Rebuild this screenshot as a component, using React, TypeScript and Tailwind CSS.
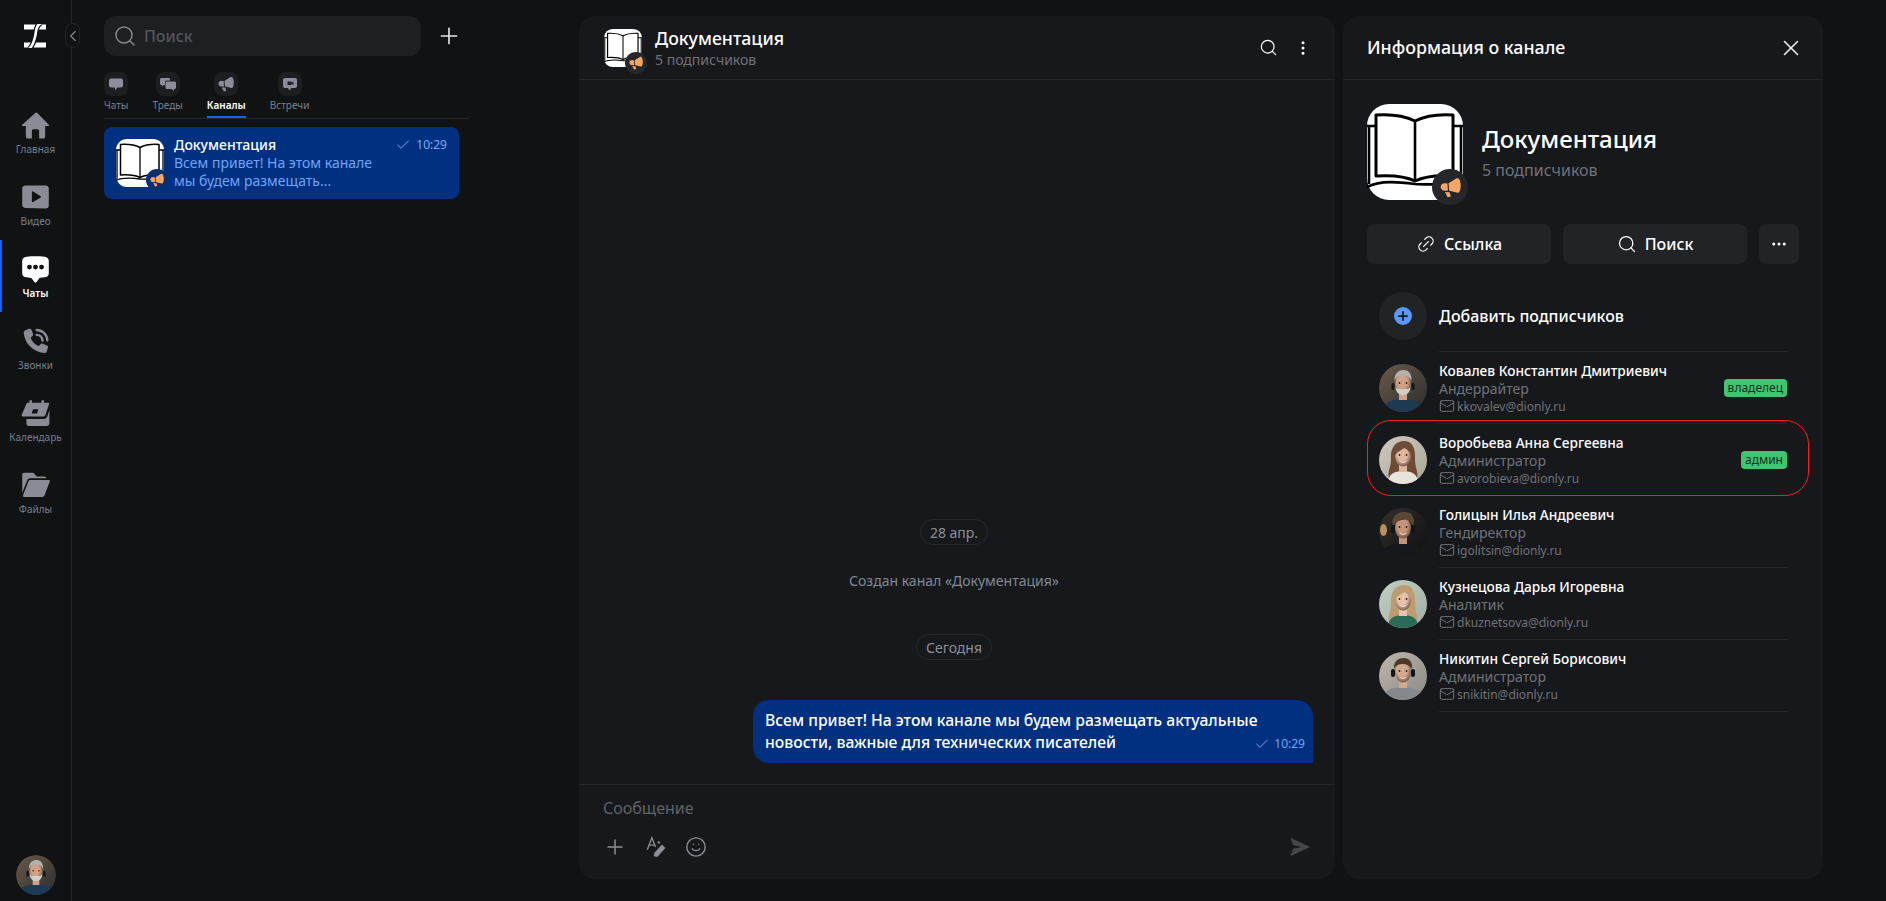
import { useId } from "react";
import { Search, Plus, X, Link2, MoreHorizontal, MoreVertical, Check, Mail, Smile, ChevronLeft } from "lucide-react";

function Book({ className }: { className?: string }) {
  return (
    <svg viewBox="0 0 96 96" className={className}>
      <rect width="96" height="96" rx="22" fill="#fff" />
      <path d="M9 11C24 10 38 12 48 17C58 12 72 10 86 11V72C72 71 58 72 48 77C38 72 24 71 9 72Z" fill="#fff" stroke="#000" strokeWidth="3" strokeLinejoin="round" />
      <path d="M48 17V77" stroke="#000" strokeWidth="2.6" />
      <path d="M0 22H9M2 22V80M86 22H96M94 22V76" stroke="#000" strokeWidth="2.6" fill="none" />
      <path d="M0 83C14 76 32 78 48 80C60 81 76 80 96 80" stroke="#000" strokeWidth="2.6" fill="none" />
    </svg>
  );
}

function Megaphone({ className, fill = "#f4a664" }: { className?: string; fill?: string }) {
  return (
    <svg viewBox="0 0 16 16" className={className} fill={fill}>
      <path d="M6.500 4.800L12.300 1.200C13.600.5 14.800 1.300 15.200 2.800C16 5.500 16 8 15.200 10.500C14.800 11.800 13.800 12.300 12.600 11.800L7 10.500Z" />
      <path d="M.5 7.500C.5 5.600 2 4.700 3.500 4.700L5.700 5L6 10.400L3.500 10.500C1.800 10.500.5 9.300.5 7.500Z" />
      <path d="M3.800 11.500L7.300 11.600L8.300 14.800L5.800 15.500Z" />
    </svg>
  );
}

function ChannelAvatar({ size, badge, badgeBg, glyph }: { size: string; badge: string; badgeBg: string; glyph: string }) {
  return (
    <div className={`relative shrink-0 ${size}`}>
      <Book className="w-full h-full" />
      <div className={`absolute flex items-center justify-center rounded-full ${badge} ${badgeBg}`}>
        <Megaphone className={glyph} />
      </div>
    </div>
  );
}

type P = { bg: string; bg2: string; skin: string; hair: string; shirt: string; kind: "man" | "grey" | "long" | "messy" | "short"; patch?: string };

function Portrait({ bg, bg2, skin, hair, shirt, kind, patch }: P) {
  const id = useId();
  return (
    <svg viewBox="0 0 48 48" className="w-12 h-12 shrink-0 rounded-full">
      <defs>
        <linearGradient id={`${id}g`} x1="0" y1="0" x2="1" y2="1">
          <stop offset="0" stopColor={bg} />
          <stop offset="1" stopColor={bg2} />
        </linearGradient>
        <radialGradient id={`${id}f`} cx="0.45" cy="0.4" r="0.7">
          <stop offset="0.45" stopColor={skin} />
          <stop offset="1" stopColor="#5d3d30" />
        </radialGradient>
        <filter id={`${id}b`} x="-15%" y="-15%" width="130%" height="130%">
          <feGaussianBlur stdDeviation="0.6" />
        </filter>
      </defs>
      <rect width="48" height="48" fill={`url(#${id}g)`} />
      <g filter={`url(#${id}b)`}>
        {patch && <ellipse cx="4.500" cy="22" rx="3.500" ry="6" fill={patch} />}
        {kind === "long" && <path d="M12 24C11 11 17 5 25 5C33 5 37 12 36 24C36 32 40 37 38 42C32 40 16 40 10 42C8 36 12 31 12 24Z" fill={hair} />}
        <path d={kind === "long" ? "M9 48C9 38 15 35 24 35C33 35 39 38 39 48Z" : "M2 48C4 38 14 35 24 35C34 35 44 38 46 48Z"} fill={shirt} />
        <rect x="20" y="27" width="8" height="9" fill={skin} />
        <ellipse cx="24" cy="20" rx="8" ry="10.5" fill={`url(#${id}f)`} />
        {kind === "long" && <path d="M15 21C14 12 20 8 25 8C31 8 34 13 33 22C31 15 28 13 25 12C22 15 18 15 15 21Z" fill={hair} />}
        {kind === "grey" && (
          <>
            <path d="M15.500 17C15 9 20 6 24.500 6C29 6 33 9 32.500 17C30 12 27 11.500 24 11.500C21 11.500 18 12 15.500 17Z" fill={hair} />
            <path d="M16.500 23C17 34 31 34 31.500 23C29 26.500 19 26.500 16.500 23Z" fill="#cfccc6" />
            <rect x="12.500" y="19" width="3" height="7" rx="1.500" fill="#15181c" />
            <rect x="32.500" y="19" width="3" height="7" rx="1.500" fill="#15181c" />
          </>
        )}
        {(kind === "messy" || kind === "short") && (
          <>
            <path d={kind === "messy" ? "M14 19C11 8 19 3 26 4C33 4 37 10 34 19C32 13 29 11 24 12C20 12 16 14 14 19Z" : "M15 17C14 9 20 6 25 6C30 6 34 10 33 17C30 13 27 12 24 12C20 12 17 13 15 17Z"} fill={hair} />
            <rect x="12" y="17" width="4" height="8" rx="2" fill="#111316" />
            <rect x="32" y="17" width="4" height="8" rx="2" fill="#111316" />
          </>
        )}
        <circle cx="20.500" cy="19" r="0.9" fill="#2b211c" />
        <circle cx="27.500" cy="19" r="0.9" fill="#2b211c" />
        <path d="M20.500 25C22.500 26.800 25.500 26.800 27.500 25" stroke="#f3e3da" strokeWidth="1" fill="none" />
      </g>
    </svg>
  );
}

const nav = [
  { label: "Главная", icon: <path d="M12 1.500L.8 11.500c-.4.4-.1 1 .4 1H4v8.500c0 1 .8 1.800 1.800 1.800H9v-6.300c0-.8.7-1.500 1.500-1.500h3c.8 0 1.500.7 1.500 1.500v6.300h3.200c1 0 1.800-.8 1.800-1.800v-8.500h2.800c.5 0 .8-.6.4-1L13.300 1.500a1 1 0 0 0-1.300 0Z" /> },
  { label: "Видео", icon: <path fillRule="evenodd" d="M3.500 2h17c1.400 0 2.500 1 2.500 2.400v14.300c0 1.500-1.200 2.600-2.700 2.500L3.400 20.600C2 20.500 1 19.400 1 18V4.500C1 3.100 2.100 2 3.500 2ZM9 7.500v7.800c0 .5.500.8 1 .5l6.300-3.700c.4-.3.4-.9 0-1.100L10 7c-.5-.3-1 0-1 .5Z" /> },
  { label: "Чаты", active: true, icon: <path fillRule="evenodd" d="M4.500 1.500c5-.5 10-.5 15 0 2 .2 3.500 1.500 3.500 3.500v10c0 2-1.500 3.300-3.500 3.500l-4 .4-2.800 3.600c-.4.500-1 .500-1.400 0L8.500 19l-4-.5C2.500 18.300 1 17 1 15V5c0-2 1.500-3.300 3.500-3.500ZM7 8a2 2 0 1 0 0 4 2 2 0 0 0 0-4Zm5 0a2 2 0 1 0 0 4 2 2 0 0 0 0-4Zm5 0a2 2 0 1 0 0 4 2 2 0 0 0 0-4Z" /> },
  { label: "Звонки", icon: <><path d="M4 2.500 7 1.500c.7-.2 1.300.1 1.600.8l1.400 3.500c.2.600 0 1.200-.4 1.600L8 8.800c1 3 3.500 5.700 6.700 7l1.700-1.700c.4-.4 1-.5 1.600-.3l3.500 1.500c.6.300 1 1 .8 1.600l-.9 3.100c-.3 1-1.200 1.700-2.300 1.500C9.500 20.500 3 13.500 2.300 5 2.200 3.900 2.900 2.900 4 2.500Z" /><path d="M13 2.500c4.500 0 8.500 3.500 8.800 8.500M13 6.500c2.500 0 4.500 2 4.800 4.700" fill="none" stroke="currentColor" strokeWidth="2" strokeLinecap="round" /></> },
  { label: "Календарь", icon: <path fillRule="evenodd" d="M7 1h2v2h8V1h2v2h3.500c.6 0 1 .5.800 1l-3 9c-.3 1-1 1.500-2 1.500H1.500c-.8 0-1.200-.6-1-1.200L4.500 4c.3-.7.800-1 1.500-1h1V1Zm3 7.500L8.800 12h4.500l1-3.500H10ZM23.500 9v11c0 1.400-1 2.300-2.300 2.300H6.500c-1.200 0-2-.8-2-2v-3.800h14.300c1.400 0 2.500-.8 3-2.200L23.500 9Z" /> },
  { label: "Файлы", icon: <><path d="M2.500 1.500h7c.6 0 1 .2 1.400.6L13 4.500h6c1 0 1.800.5 2 1.500H7.500c-1.200 0-2 .7-2.400 1.800L1 18V3c0-.9.600-1.500 1.500-1.500Z" /><path d="M7.500 7.500H23c.7 0 1 .6.800 1.100L19.500 20c-.4 1-1.200 1.500-2.200 1.500H2.500c-.7 0-1.100-.6-.9-1.200L6 8.800c.3-.8.800-1.300 1.500-1.300Z" /></> },
];

function Logo() {
  return (
    <svg viewBox="0 0 22 24" className="w-[22px] h-6">
      <path d="M0 0.500H22V5.500H0ZM0 18.500H22V23.500H0Z" fill="#fff" />
      <path d="M17 -1C11 2 12.500 8 11 13C10 17 9 22 5 25" stroke="#111214" strokeWidth="5" fill="none" />
      <path d="M17 -1C11 2 12.500 8 11 13C10 17 9 22 5 25" stroke="#fff" strokeWidth="2.600" fill="none" />
    </svg>
  );
}

const tabs = [
  { label: "Чаты", glyph: <svg viewBox="0 0 16 16" className="w-4 h-4" fill="#8c8c9a"><path d="M3 2.500h10c1.200 0 2 .8 2 2v5c0 1.200-.8 2-2 2H9.500L7 14.500V11.500H3c-1.200 0-2-.8-2-2v-5c0-1.200.8-2 2-2Z" /></svg> },
  { label: "Треды", glyph: <svg viewBox="0 0 16 16" className="w-4 h-4" fill="#8c8c9a"><path d="M1.500 2h7C9.400 2 10 2.600 10 3.500v1H7C5.700 4.500 5 5.300 5 6.500V9H4L2 10.500V9h-.5C.6 9 0 8.400 0 7.500v-4C0 2.600.6 2 1.500 2Z" /><path d="M7 5.500h7.500c.9 0 1.500.6 1.500 1.500v4.500c0 .9-.6 1.500-1.500 1.500H14v2l-2.500-2H7c-.9 0-1.500-.6-1.500-1.500V7c0-.9.6-1.500 1.500-1.500Z" /></svg> },
  { label: "Каналы", active: true, glyph: <Megaphone className="w-4 h-4" fill="#8c8c9a" /> },
  { label: "Встречи", glyph: <svg viewBox="0 0 16 16" className="w-4 h-4"><path fillRule="evenodd" fill="#8c8c9a" d="M3 2h10c1.200 0 2 .8 2 2v6c0 1.200-.8 2-2 2H9.500L7.500 14.500 6 12H3c-1.200 0-2-.8-2-2V4c0-1.200.8-2 2-2Zm2.500 3.500v3.500h4V7.800l2 1.200V5.500l-2 1.200V5.500h-4Z" /></svg> },
];

const members: (P & { name: string; role: string; email: string; tag?: string; mark?: boolean })[] = [
  { name: "Ковалев Константин Дмитриевич", role: "Андеррайтер", email: "kkovalev@dionly.ru", tag: "владелец", bg: "#6b5a49", bg2: "#2a2d30", skin: "#cfa288", hair: "#b3b1ac", shirt: "#1d3a52", kind: "grey" },
  { name: "Воробьева Анна Сергеевна", role: "Администратор", email: "avorobieva@dionly.ru", tag: "админ", mark: true, bg: "#cfcabd", bg2: "#a9a597", skin: "#e0b8a0", hair: "#6e4c36", shirt: "#e8e4d9", kind: "long" },
  { name: "Голицын Илья Андреевич", role: "Гендиректор", email: "igolitsin@dionly.ru", bg: "#33302c", bg2: "#0f1012", skin: "#c4957a", hair: "#5a4634", shirt: "#16171a", kind: "messy", patch: "#b98f5f" },
  { name: "Кузнецова Дарья Игоревна", role: "Аналитик", email: "dkuznetsova@dionly.ru", bg: "#c3cdc4", bg2: "#9fb0a6", skin: "#e6c2aa", hair: "#bd9c70", shirt: "#2a6a58", kind: "long" },
  { name: "Никитин Сергей Борисович", role: "Администратор", email: "snikitin@dionly.ru", bg: "#bdb7ad", bg2: "#8b8a86", skin: "#d2a88e", hair: "#4d392a", shirt: "#85898d", kind: "short" },
];

function SideNav() {
  return (
    <nav className="relative flex h-full w-[72px] shrink-0 flex-col items-stretch border-r border-[#24262a]">
      <div className="flex h-[96px] items-start justify-center pt-6 pr-px">
        <Logo />
      </div>
      <div className="absolute left-[65px] top-[23px] flex h-[25px] w-[15px] items-center justify-center rounded-full border border-[#24262a] bg-[#111214]">
        <ChevronLeft className="h-[18px] w-[18px] shrink-0 text-[#8b8c94]" strokeWidth={1.5} />
      </div>
      {nav.map((n) => (
        <div key={n.label} className={`relative flex h-[72px] flex-col items-center pt-[15px] ${n.active ? "text-white" : "text-[#8b8b96]"}`}>
          {n.active && <div className="absolute left-0 top-0 h-full w-[2px] bg-[#0f62fe]" />}
          <svg viewBox="0 0 24 24" className="h-[29px] w-[29px]" fill="currentColor">{n.icon}</svg>
          <span className={`mt-[2px] text-[10px] leading-[14px] ${n.active ? "font-semibold text-white" : "text-[#767f8c]"}`}>{n.label}</span>
        </div>
      ))}
      <div className="mt-auto flex justify-center pb-[6px]">
        <div className="h-10 w-10 overflow-hidden rounded-full [&>svg]:h-10 [&>svg]:w-10">
          <Portrait {...members[0]} />
        </div>
      </div>
    </nav>
  );
}

function ChatList() {
  return (
    <section className="flex w-[507px] shrink-0 flex-col pl-8">
      <div className="mt-4 flex items-center">
        <div className="flex h-10 w-[317px] items-center rounded-xl bg-[#1d1f22] pl-[9px]">
          <Search className="h-6 w-6 text-[#85868e]" strokeWidth={1.5} />
          <span className="ml-[7px] text-[16px] font-medium text-[#54565c]">Поиск</span>
        </div>
        <Plus className="ml-[15px] h-[26px] w-[26px] text-[#e8e8ea]" strokeWidth={1.5} />
      </div>
      <div className="mt-4 flex h-[47px] w-[365px] gap-6 border-b border-[#24262a]">
        {tabs.map((t) => (
          <div key={t.label} className="flex flex-col items-center">
            <div className="flex h-6 w-6 items-center justify-center rounded-lg bg-[#1c1e21]">{t.glyph}</div>
            <span className={`mt-px text-[10px] leading-[16px] ${t.active ? "font-semibold text-white" : "text-[#767f8c]"}`}>{t.label}</span>
            {t.active && <div className="mt-[3px] h-[2px] w-full bg-[#0f62fe]" />}
          </div>
        ))}
      </div>
      <div className="mt-2 flex h-[72px] w-[355px] items-center rounded-lg bg-[#00307f] pl-3 pr-3">
        <ChannelAvatar size="w-12 h-12" badge="right-[-4px] bottom-[-4px] w-[22px] h-[22px]" badgeBg="bg-[#0a2f6e]" glyph="w-[14px] h-[14px]" />
        <div className="ml-[10px] min-w-0 flex-1">
          <div className="flex items-center justify-between">
            <span className="text-[14px] font-medium leading-[18px] text-white">Документация</span>
            <span className="flex items-center gap-[5px] text-[12px] leading-[18px] text-[#7aa9f5]">
              <Check className="h-4 w-4 text-[#7aa9f5]" strokeWidth={1.5} />
              10:29
            </span>
          </div>
          <p className="w-[210px] text-[14px] leading-[18px] text-[#6fa4f8]">Всем привет! На этом канале мы будем размещать...</p>
        </div>
      </div>
    </section>
  );
}

function Chat() {
  return (
    <main className="mt-4 mb-[22px] flex w-[756px] shrink-0 flex-col rounded-2xl bg-[#17181b]">
      <header className="flex h-[64px] shrink-0 items-center border-b border-[#24262a] pl-[25px] pr-[23px]">
        <ChannelAvatar size="w-[38px] h-[40px]" badge="right-[-5px] bottom-[-6px] w-[22px] h-[22px]" badgeBg="bg-[#24262a]" glyph="w-[14px] h-[14px]" />
        <div className="ml-[13px] flex-1">
          <div className="text-[17.7px] font-medium leading-[24px] text-white">Документация</div>
          <div className="text-[14px] leading-[20px] text-[#6f7279]">5 подписчиков</div>
        </div>
        <Search className="h-[19px] w-[19px] text-white" strokeWidth={1.5} />
        <MoreVertical className="ml-[16px] h-[18px] w-[18px] text-white" strokeWidth={2} />
      </header>
      <div className="flex flex-1 flex-col items-center justify-end pb-[21px] pr-[22px] pl-[22px]">
        <div className="mr-[6px] flex h-[26px] items-center rounded-full border border-[#25272b] px-[9px] text-[14px] text-[#8a8f98]">28 апр.</div>
        <div className="mr-[6px] mt-[26px] text-[14px] leading-[20px] text-[#7f8896]">Создан канал «Документация»</div>
        <div className="mr-[6px] mt-[43px] flex h-[26px] items-center rounded-full border border-[#25272b] px-[9px] text-[14px] text-[#8a8f98]">Сегодня</div>
        <div className="mt-[40px] flex w-[560px] self-end flex-col rounded-[16px] rounded-br-none bg-[#00307f] pt-[9px] pb-[10px] pl-3 pr-2">
          <p className="text-[15.7px] font-medium leading-[22px] text-white">Всем привет! На этом канале мы будем размещать актуальные</p>
          <div className="flex items-end justify-between">
            <span className="text-[15.7px] font-medium leading-[22px] text-white">новости, важные для технических писателей</span>
            <span className="flex items-center gap-[4px] text-[12px] leading-[18px] text-[#6fa4f8]">
              <Check className="h-4 w-4" strokeWidth={1.5} />
              10:29
            </span>
          </div>
        </div>
      </div>
      <footer className="flex h-[95px] shrink-0 flex-col border-t border-[#24262a] pl-6 pr-6">
        <div className="mt-[11px] text-[16px] leading-[24px] text-[#5f6268]">Сообщение</div>
        <div className="mt-[15px] flex items-center gap-[18px] text-[#8d8e96]">
          <Plus className="h-[24px] w-[24px]" strokeWidth={1.5} />
          <svg viewBox="0 0 24 24" className="h-[22px] w-[22px]" fill="none" stroke="currentColor">
            <path d="M2.500 15L7.500 2L11.500 12M4.500 10H10" strokeWidth="1.500" />
            <path d="M18.500 9.500L22 13L13.500 22.500L10 22L10.300 18.500Z" fill="currentColor" strokeWidth="0.500" />
            <circle cx="15" cy="7" r="1.300" fill="currentColor" strokeWidth="0" />
          </svg>
          <Smile className="h-[22px] w-[22px]" strokeWidth={1.500} />
          <svg viewBox="0 0 24 24" className="ml-auto h-[22px] w-[22px]" fill="#44464b">
            <path d="M1.500 2L23 12L1.500 22L4.500 14L14 12L4.500 10Z" />
          </svg>
        </div>
      </footer>
    </main>
  );
}

function Row({ m }: { m: (typeof members)[number] }) {
  return (
    <div className="relative flex h-[72px] items-center pl-3 pr-3">
      {m.mark && <div className="pointer-events-none absolute left-0 -right-[10px] -top-1 bottom-0 rounded-[24px] border border-[#ff1a1f]" />}
      <Portrait {...m} />
      <div className="ml-3 flex h-full flex-1 items-center justify-between border-b border-[#24262a]">
        <div className="pt-px">
          <div className="text-[13.7px] font-medium leading-[18px] text-white">{m.name}</div>
          <div className="text-[14px] leading-[18px] text-[#6f7279]">{m.role}</div>
          <div className="flex items-center text-[12px] leading-[17px] text-[#6f7279]">
            <Mail className="mr-[2px] h-4 w-4" strokeWidth={1.5} />
            {m.email}
          </div>
        </div>
        {m.tag && <span className="flex h-[18px] items-center rounded-[4px] bg-[#3fc571] px-1 text-[12px] text-[#10301d]">{m.tag}</span>}
      </div>
    </div>
  );
}

function Info() {
  return (
    <aside className="mt-4 mb-[22px] ml-[8px] flex w-[480px] shrink-0 flex-col rounded-2xl bg-[#17181b]">
      <header className="flex h-[64px] shrink-0 items-center justify-between border-b border-[#24262a] pl-6 pr-[19px]">
        <span className="text-[17.8px] font-medium text-white">Информация о канале</span>
        <X className="h-[26px] w-[26px] text-[#f0f0f0]" strokeWidth={1.400} />
      </header>
      <div className="flex flex-col px-6 pt-6">
        <div className="flex items-center">
          <ChannelAvatar size="w-24 h-24" badge="right-[-5px] bottom-[-5px] w-9 h-9" badgeBg="bg-[#24262a]" glyph="w-[21px] h-[21px]" />
          <div className="ml-[19px]">
            <div className="text-[24px] font-medium leading-[32px] text-white">Документация</div>
            <div className="mt-[3px] text-[16px] leading-[24px] text-[#6f7279]">5 подписчиков</div>
          </div>
        </div>
        <div className="mt-6 flex gap-3">
          <button className="flex h-10 w-[184px] items-center justify-center gap-2 rounded-lg bg-[#212327] text-[16px] font-medium text-white">
            <Link2 className="h-5 w-5 -rotate-45" strokeWidth={1.5} />
            Ссылка
          </button>
          <button className="flex h-10 w-[184px] items-center justify-center gap-2 rounded-lg bg-[#212327] text-[16px] font-medium text-white">
            <Search className="h-5 w-5" strokeWidth={1.5} />
            Поиск
          </button>
          <button className="flex h-10 w-10 items-center justify-center rounded-lg bg-[#212327] text-white">
            <MoreHorizontal className="h-[18px] w-[18px]" strokeWidth={2} />
          </button>
        </div>
        <div className="mt-4 flex h-[72px] items-center pl-3 pr-3">
          <div className="flex h-12 w-12 shrink-0 items-center justify-center rounded-full bg-[#212327]">
            <div className="flex h-[18px] w-[18px] items-center justify-center rounded-full bg-[#5b97f7]">
              <Plus className="h-[14px] w-[14px] text-[#17191c]" strokeWidth={3} />
            </div>
          </div>
          <div className="ml-3 flex h-full flex-1 items-center border-b border-[#24262a] text-[16px] font-medium text-white">Добавить подписчиков</div>
        </div>
        {members.map((m) => (
          <Row key={m.email} m={m} />
        ))}
      </div>
    </aside>
  );
}

export default function App() {
  return (
    <div className="flex h-[901px] w-[1886px] overflow-hidden bg-[#111214] font-['Noto_Sans',sans-serif]">
      <SideNav />
      <ChatList />
      <Chat />
      <Info />
    </div>
  );
}
